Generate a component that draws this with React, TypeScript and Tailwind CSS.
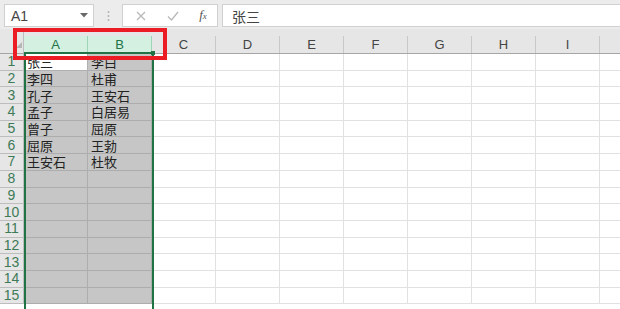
const cols = ["A", "B", "C", "D", "E", "F", "G", "H", "I"];

const data: [string, string][] = [
  ["张三", "李白"],
  ["李四", "杜甫"],
  ["孔子", "王安石"],
  ["孟子", "白居易"],
  ["曾子", "屈原"],
  ["屈原", "王勃"],
  ["王安石", "杜牧"],
];

const rows = Array.from({ length: 15 }, (_, i) => i + 1);

const cjk = { fontFamily: '"Noto Sans CJK SC", "Noto Sans", sans-serif' };

export default function App() {
  return (
    <div
      className="relative h-[309px] w-[620px] overflow-hidden bg-white text-[#333]"
      style={{ fontFamily: '"Liberation Sans", "Noto Sans CJK SC", sans-serif' }}
    >
      {/* formula bar */}
      <div className="flex h-[29px] items-start bg-[#ececec] pt-[4px] pl-[4px]">
        <div className="flex h-[23px] w-[90px] items-center justify-between border border-[#d0d0d0] bg-white pl-[6px] pr-[5px]">
          <span className="text-[14px] leading-[16px] text-[#444]">A1</span>
          <svg width="8" height="5" viewBox="0 0 8 5">
            <path d="M0 0 H8 L4 4.5 Z" fill="#6a6a6a" />
          </svg>
        </div>
        <div className="flex h-[23px] w-[28px] items-center justify-center">
          <svg width="3" height="12" viewBox="0 0 3 12">
            <circle cx="1.5" cy="2" r="1" fill="#b4b4b4" />
            <circle cx="1.5" cy="6" r="1" fill="#b4b4b4" />
            <circle cx="1.5" cy="10" r="1" fill="#b4b4b4" />
          </svg>
        </div>
        <div className="flex h-[23px] w-[96px] items-center border border-[#d0d0d0] bg-white">
          <div className="flex w-[33px] justify-center pl-[2px]">
            <svg width="10" height="10" viewBox="0 0 10 10">
              <path d="M1 1 L9 9 M9 1 L1 9" stroke="#b8b8b8" strokeWidth="1.3" />
            </svg>
          </div>
          <div className="flex w-[33px] justify-center">
            <svg width="12" height="10" viewBox="0 0 12 10">
              <path d="M1 5.5 L4.5 9 L11 1" stroke="#b8b8b8" strokeWidth="1.3" fill="none" />
            </svg>
          </div>
          <div className="flex w-[28px] justify-center">
            <span
              className="text-[13px] leading-[15px] italic text-[#555]"
              style={{ fontFamily: '"Liberation Serif", serif' }}
            >
              f<span className="text-[9px]">x</span>
            </span>
          </div>
        </div>
        <div className="ml-[4px] flex h-[23px] flex-1 items-center border border-r-0 border-[#d0d0d0] bg-white pl-[9px]">
          <span className="text-[14px] leading-[18px] text-[#444]" style={cjk}>
            张三
          </span>
        </div>
      </div>

      {/* column headers */}
      <div className="flex h-[25px] border-b border-[#a6a6a6] bg-[#e6e6e6]">
        <div className="relative w-[24px] shrink-0 border-r border-[#bdbdbd]">
          <svg className="absolute left-[16px] top-[13px]" width="6" height="6" viewBox="0 0 6 6">
            <path d="M6 0 V6 H0 Z" fill="#b5b5b5" />
          </svg>
        </div>
        {cols.map((c, i) => {
          const sel = i < 2;
          return (
            <div key={c} className="flex w-[64px] shrink-0 flex-col">
              <div className="h-[7px]" />
              <div
                className={`flex flex-1 items-center justify-center border-r text-[13px] leading-[15px] ${
                  sel
                    ? "border-[#9fd5b7] bg-[#d3f0e0] text-[#217346]"
                    : "border-[#c8c8c8] text-[#444]"
                }`}
              >
                {c}
              </div>
            </div>
          );
        })}
        <div className="flex-1" />
      </div>

      {/* grid rows */}
      {rows.map((r) => {
        const d = data[r - 1];
        return (
          <div key={r} className="flex h-[16.7px]">
            <div className="flex w-[24px] shrink-0 items-center justify-center border-r border-b border-[#bdbdbd] bg-[#e6e6e6] text-[14px] leading-[15px] text-[#3f7a57]">
              {r}
            </div>
            {cols.map((c, i) => {
              const sel = i < 2;
              const active = r === 1 && i === 0;
              return (
                <div
                  key={c}
                  className={`flex w-[64px] shrink-0 items-center whitespace-nowrap border-r border-b pl-[3px] text-[13px] leading-[15px] text-[#222] ${
                    active
                      ? "border-[#b0b0b0] bg-white"
                      : sel
                        ? "border-[#adadad] bg-[#c6c6c6]"
                        : "border-[#e1e1e1] bg-white"
                  }`}
                  style={cjk}
                >
                  {sel && d ? d[i] : ""}
                </div>
              );
            })}
            <div className="flex-1 border-b border-[#e1e1e1]" />
          </div>
        );
      })}

      {/* selection outline */}
      <div className="absolute left-[24px] top-[52px] h-[270px] w-[130px] border-2 border-[#217346]" />
      <div className="absolute left-[151px] top-[51px] h-[4px] w-[4px] bg-[#217346]" />

      {/* red annotation box */}
      <div className="absolute left-[13px] top-[28px] h-[32px] w-[154px] border-4 border-[#ec1c24]" />
    </div>
  );
}
